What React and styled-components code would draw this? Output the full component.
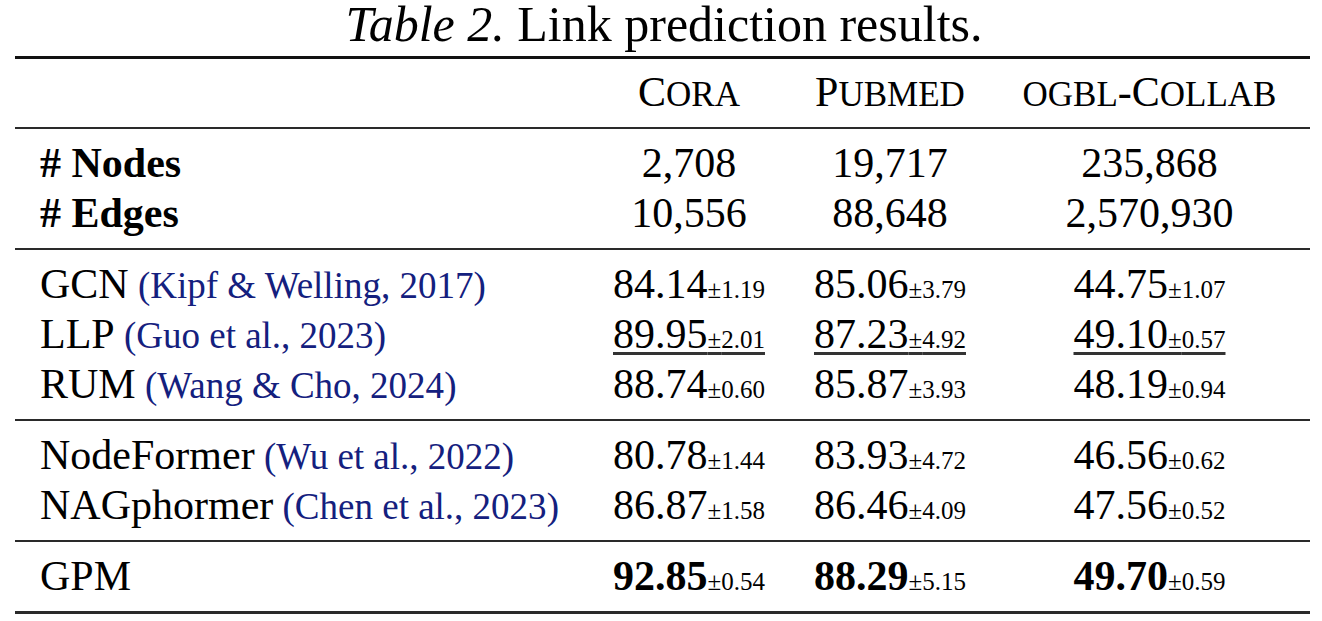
import React from 'react';
import styled, {createGlobalStyle} from 'styled-components';

const GlobalStyle = createGlobalStyle`
    body{
        margin: 0;
        background: #fff;
        font-family: "Liberation Serif", "Times New Roman", serif;
        color: #000;
    }
`;

const groups = [
    [
        {label: '# Nodes', bold: true, stats: ['2,708', '19,717', '235,868']},
        {label: '# Edges', bold: true, stats: ['10,556', '88,648', '2,570,930']},
    ],
    [
        {label: 'GCN', cite: 'Kipf & Welling, 2017', scores: [['84.14', '1.19'], ['85.06', '3.79'], ['44.75', '1.07']]},
        {label: 'LLP', cite: 'Guo et al., 2023', second: true, scores: [['89.95', '2.01'], ['87.23', '4.92'], ['49.10', '0.57']]},
        {label: 'RUM', cite: 'Wang & Cho, 2024', scores: [['88.74', '0.60'], ['85.87', '3.93'], ['48.19', '0.94']]},
    ],
    [
        {label: 'NodeFormer', cite: 'Wu et al., 2022', scores: [['80.78', '1.44'], ['83.93', '4.72'], ['46.56', '0.62']]},
        {label: 'NAGphormer', cite: 'Chen et al., 2023', scores: [['86.87', '1.58'], ['86.46', '4.09'], ['47.56', '0.52']]},
    ],
    [
        {label: 'GPM', best: true, scores: [['92.85', '0.54'], ['88.29', '5.15'], ['49.70', '0.59']]},
    ],
];

const App = () => {
    return(
        <Page>
            <GlobalStyle />
            <Caption><em>Table 2.</em> Link prediction results.</Caption>
            <Table>
                <Section $pad="8px 0 10px">
                    <Row>
                        <Cell $left></Cell>
                        <Cell>C<Sc>ORA</Sc></Cell>
                        <Cell>P<Sc>UBMED</Sc></Cell>
                        <Cell><Sc>OGBL</Sc>-C<Sc>OLLAB</Sc></Cell>
                    </Row>
                </Section>
                {groups.map((group, gi) => (
                    <Section key={gi} $last={gi === groups.length - 1}>
                        {group.map(row => (
                            <Row key={row.label}>
                                <Cell $left $bold={row.bold}>
                                    {row.label}
                                    {row.cite && <Cite> ({row.cite})</Cite>}
                                </Cell>
                                {row.stats && row.stats.map(s => <Cell key={s}>{s}</Cell>)}
                                {row.scores && row.scores.map(([m, sd]) => (
                                    <Cell key={m}>
                                        <Score $under={row.second}>
                                            <Mean $bold={row.best}>{m}</Mean>
                                            <Std>±{sd}</Std>
                                        </Score>
                                    </Cell>
                                ))}
                            </Row>
                        ))}
                    </Section>
                ))}
            </Table>
        </Page>
    )
}

const Page = styled.div`
    width: 1322px;
    height: 621px;
    overflow: hidden;
`;

const Caption = styled.div`
    font-size: 50px;
    line-height: 52px;
    text-align: center;
    padding-left: 6px;
    margin-top: -2px;
    margin-bottom: 6px;
    em{
        font-style: italic;
    }
`;

const Table = styled.div`
    margin-left: 15px;
    width: 1295px;
    border-top: 3px solid #111;
`;

const Section = styled.div`
    padding: ${p => p.$pad || '9px 0 10px'};
    border-bottom: ${p => p.$last ? '3px' : '2px'} solid #2a2a2a;
`;

const Row = styled.div`
    display: grid;
    grid-template-columns: 572px 204px 198px 321px;
    height: 50px;
    line-height: 50px;
    font-size: 42px;
    white-space: nowrap;
`;

const Cell = styled.div`
    text-align: ${p => p.$left ? 'left' : 'center'};
    padding-left: ${p => p.$left ? '25px' : '0'};
    font-weight: ${p => p.$bold ? 'bold' : 'normal'};
`;

const Sc = styled.span`
    font-size: 35px;
`;

const Cite = styled.span`
    font-size: 37px;
    color: #14207e;
`;

const Score = styled.span`
    text-decoration: ${p => p.$under ? 'underline' : 'none'};
    text-decoration-thickness: 3px;
    text-underline-offset: 4px;
    text-decoration-color: #333;
`;

const Mean = styled.span`
    font-weight: ${p => p.$bold ? 'bold' : 'normal'};
`;

const Std = styled.span`
    font-size: 25px;
`;

export default App;
